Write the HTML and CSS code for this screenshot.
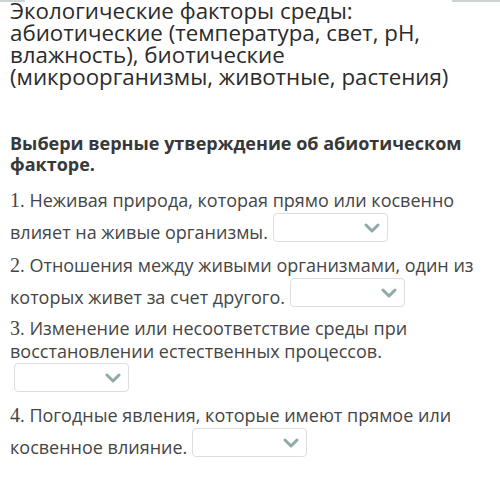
FILE: index.html
```html
<!DOCTYPE html>
<html lang="ru">
<head>
<meta charset="utf-8">
<link rel="stylesheet" href="styles.css">
</head>
<body>
<div class="topline"><span class="tl-left"></span><span class="tl-right"></span></div>
<div class="page">
  <h1 class="title">Экологические факторы среды: абиотические (температура, свет, pH, влажность), биотические (микроорганизмы, животные, растения)</h1>
  <h2 class="question">Выбери верные утверждение об абиотическом факторе.</h2>
  <p class="item item-first"><span class="num">1</span>. Неживая природа, которая прямо или косвенно влияет на живые организмы. <span class="select"><svg class="chev" viewBox="0 0 16 10" width="16" height="10"><path d="M2 2 L8 8 L14 2" fill="none" stroke="#8fa9a9" stroke-width="3" stroke-linecap="round" stroke-linejoin="round"/></svg></span></p>
  <p class="item"><span class="num">2</span>. Отношения между живыми организмами, один из которых живет за счет другого. <span class="select"><svg class="chev" viewBox="0 0 16 10" width="16" height="10"><path d="M2 2 L8 8 L14 2" fill="none" stroke="#8fa9a9" stroke-width="3" stroke-linecap="round" stroke-linejoin="round"/></svg></span></p>
  <div class="item item-tight"><p class="item-text"><span class="num">3</span>. Изменение или несоответствие среды при восстановлении естественных процессов.</p><span class="select select-block"><svg class="chev" viewBox="0 0 16 10" width="16" height="10"><path d="M2 2 L8 8 L14 2" fill="none" stroke="#8fa9a9" stroke-width="3" stroke-linecap="round" stroke-linejoin="round"/></svg></span></div>
  <p class="item item-last"><span class="num">4</span>. Погодные явления, которые имеют прямое или косвенное влияние. <span class="select"><svg class="chev" viewBox="0 0 16 10" width="16" height="10"><path d="M2 2 L8 8 L14 2" fill="none" stroke="#8fa9a9" stroke-width="3" stroke-linecap="round" stroke-linejoin="round"/></svg></span></p>
</div>
</body>
</html>
```
FILE: styles.css
```css
html, body {
  margin: 0;
  padding: 0;
  background: #ffffff;
}
body {
  font-family: "Open Sans", "Noto Sans", sans-serif;
  color: #3a3a3a;
  width: 500px;
  height: 487px;
  overflow: hidden;
  position: relative;
}
.topline {
  position: absolute;
  left: 0;
  right: 0;
  top: 0;
  display: flex;
  justify-content: space-between;
  height: 2px;
}
.tl-left {
  width: 25px;
  height: 2px;
  background: #cdd3d3;
}
.tl-right {
  width: 48px;
  height: 2px;
  background: #cdd3d3;
}
.page {
  padding: 0 0 0 10px;
  width: 480px;
}
.title {
  margin: 0;
  width: 460px;
  font-size: 22.3px;
  font-weight: 400;
  line-height: 22px;
  color: #2b2b2b;
}
.question {
  margin: 44.5px 0 0 0;
  width: 470px;
  font-size: 18px;
  font-weight: 700;
  line-height: 21px;
  color: #383838;
}
.item {
  margin: 3px 0 0 0;
  font-size: 18px;
  line-height: 31px;
  color: #454545;
}
.item-first {
  margin-top: 10px;
}
.item-tight {
  margin-top: 4px;
  line-height: 23px;
}
.item-last {
  margin-top: 8px;
}
.item-text {
  margin: 0;
}
.num {
  font-family: "Liberation Serif", "DejaVu Serif", serif;
  font-size: 20px;
}
.select {
  display: inline-block;
  position: relative;
  width: 113px;
  height: 27px;
  margin: -3px 0 3px 0;
  border: 1px solid #dedede;
  border-radius: 4px;
  vertical-align: -6.5px;
  background: #fff;
  box-sizing: content-box;
}
.select-block {
  display: block;
  margin: 0 0 0 4px;
}
.chev {
  position: absolute;
  right: 7px;
  top: 9px;
}
```
